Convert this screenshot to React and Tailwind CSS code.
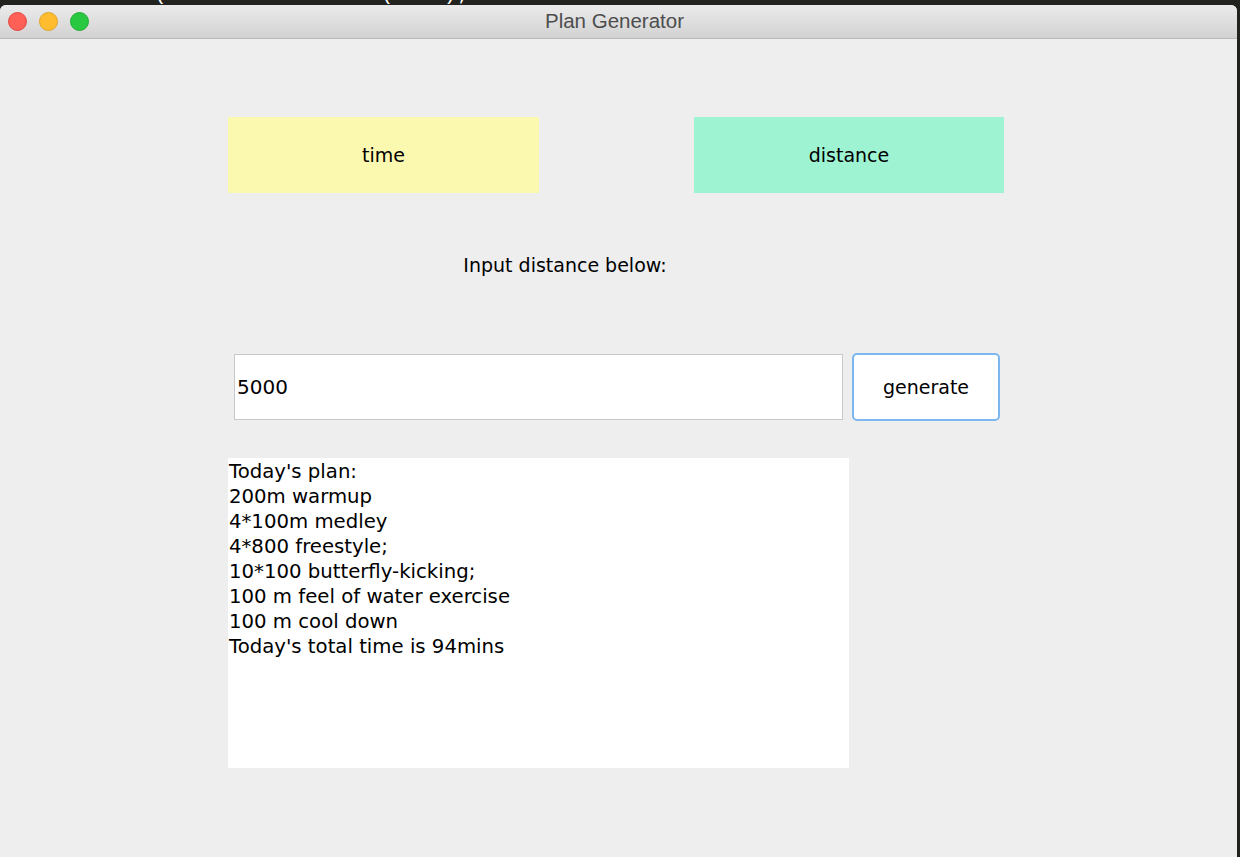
const planLines = [
  "Today's plan:",
  "200m warmup",
  "4*100m medley",
  "4*800 freestyle;",
  "10*100 butterfly-kicking;",
  "100 m feel of water exercise",
  "100 m cool down",
  "Today's total time is 94mins",
];

function TrafficLights() {
  return (
    <div className="flex items-center gap-[12px] pl-[8px]">
      <span className="w-[19px] h-[19px] rounded-full bg-[#fe5f57] border border-[#e5463f]" />
      <span className="w-[19px] h-[19px] rounded-full bg-[#febc2e] border border-[#e0a426]" />
      <span className="w-[19px] h-[19px] rounded-full bg-[#28c840] border border-[#1fae33]" />
    </div>
  );
}

export default function App() {
  return (
    <div
      className="w-[1240px] h-[857px] bg-[#22221e] flex flex-col overflow-hidden"
      style={{ fontFamily: "'DejaVu Sans', sans-serif" }}
    >
      {/* editor behind the window, only a sliver shows */}
      <div className="h-[5px] overflow-hidden shrink-0">
        <div className="pl-[154px] -mt-[16px] text-[21px] leading-[21px] text-white font-mono">
          (button.setVisible(true);
        </div>
      </div>

      <div className="flex-1 flex flex-col mr-[3px] rounded-t-[6px] overflow-hidden bg-[#eeeeee]">
        {/* title bar */}
        <div className="relative h-[34px] shrink-0 flex items-center bg-gradient-to-b from-[#ebebeb] to-[#d2d2d2] border-b border-[#b9b9b9]">
          <TrafficLights />
          <div
            className="absolute inset-0 flex items-center justify-center pr-[8px] text-[20.5px] text-[#4d4d4d]"
            style={{ fontFamily: "'Liberation Sans', Arial, sans-serif" }}
          >
            Plan Generator
          </div>
        </div>

        {/* content */}
        <div className="flex-1 flex flex-col pl-[228px] text-black">
          <div className="flex mt-[78px] gap-[155px]">
            <button className="w-[311px] h-[76px] bg-[#fbf8b0] text-[19px]">time</button>
            <button className="w-[310px] h-[76px] bg-[#9ef4d2] text-[19px]">distance</button>
          </div>

          <div className="w-[674px] mt-[60px] text-center text-[19px] leading-[24px]">
            Input distance below:
          </div>

          <div className="flex items-center mt-[76px] pl-[6px] gap-[9px]">
            <div className="w-[609px] h-[66px] bg-white border border-[#c8c8c8] flex items-center pl-[2px] text-[20px]">
              5000
            </div>
            <button className="w-[148px] h-[68px] bg-white border-2 border-[#7db7f0] rounded-[5px] text-[19px]">
              generate
            </button>
          </div>

          <div className="w-[621px] h-[310px] mt-[37px] bg-white pl-[1px] pt-[1px] text-[19.7px] leading-[25px]">
            {planLines.map((l) => (
              <div key={l}>{l}</div>
            ))}
          </div>
        </div>
      </div>
    </div>
  );
}
